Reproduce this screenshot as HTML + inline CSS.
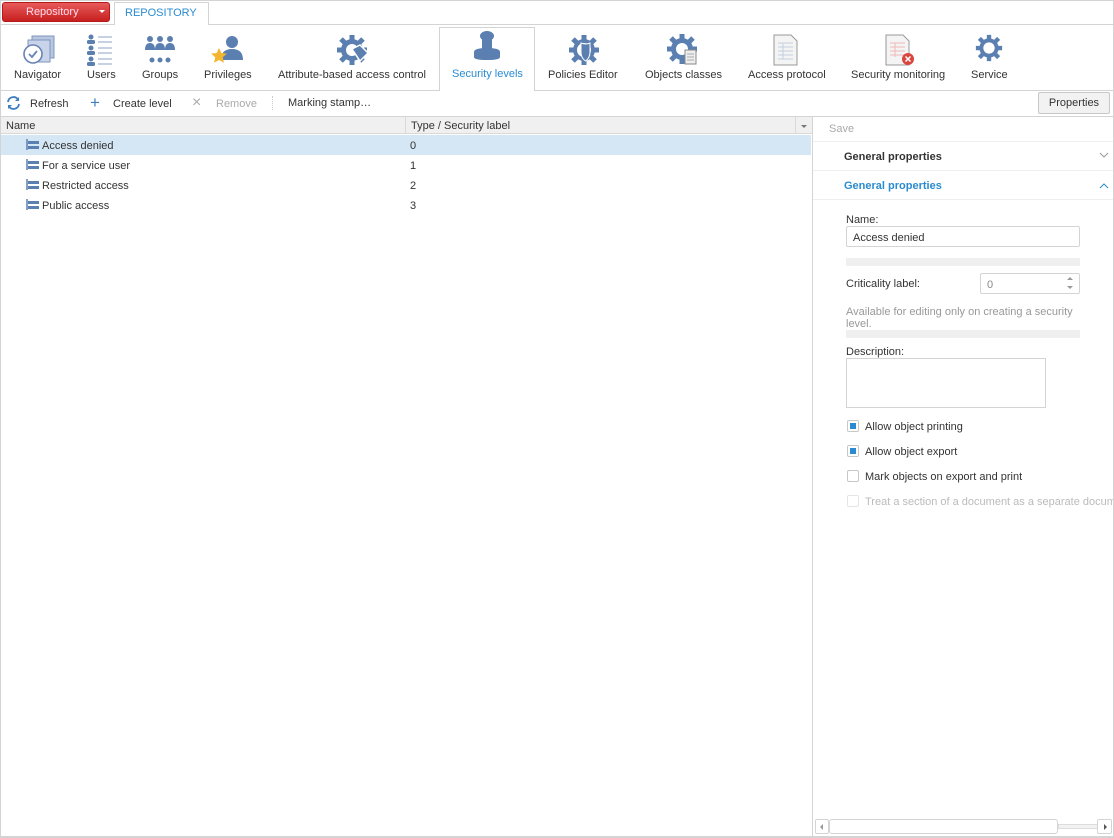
<!DOCTYPE html>
<html><head><meta charset="utf-8"><style>
*{box-sizing:border-box;margin:0;padding:0}
body{width:1114px;height:838px;overflow:hidden;background:#fff;font-family:"Liberation Sans",Arial,sans-serif;font-size:11px;color:#333;position:relative}
.a{position:absolute}
.frame{left:0;top:0;width:1114px;height:838px;border:1px solid #d4d4d4}
.ic{position:absolute;top:34px}
.lbl{position:absolute;top:69px;white-space:nowrap}
.row{position:absolute;left:1px;width:810px;height:20px;line-height:20px}
.row .n{position:absolute;left:41px;top:1px}
.row .v{position:absolute;left:409px;top:1px}
.row svg{position:absolute;left:25px;top:4px}
.cb{position:absolute;left:847px;width:12px;height:12px;border:1px solid #c8c8c8;border-radius:2px;background:#fff}
.cb.on::after{content:"";position:absolute;left:2px;top:2px;width:6px;height:6px;background:#2a8bd0}
.cl{position:absolute;left:865px;white-space:nowrap}
</style></head><body>
<div class="a frame"></div>
<div class="a" style="left:2px;top:2px;width:108px;height:20px;border-radius:3px;background:linear-gradient(#e85a5a,#c71f1f);border:1px solid #b51a1a"></div>
<div class="a" style="left:26px;top:6px;color:#fde;font-size:11px">Repository</div>
<div class="a" style="left:99px;top:10px;width:0;height:0;border-left:3px solid transparent;border-right:3px solid transparent;border-top:3px solid #fff"></div>
<div class="a" style="left:0;top:24px;width:1114px;height:1px;background:#d4d4d4"></div>
<div class="a" style="left:114px;top:2px;width:95px;height:23px;border:1px solid #d4d4d4;border-bottom:none;background:#fff"></div>
<div class="a" style="left:125px;top:7px;color:#2a8bd0;font-size:11px">REPOSITORY</div>
<div class="a" style="left:0;top:90px;width:1114px;height:1px;background:#d4d4d4"></div>
<div class="a" style="left:439px;top:27px;width:96px;height:64px;border:1px solid #d4d4d4;border-bottom:none;background:#fff"></div>
<svg class="ic" style="left:22px" width="34" height="32" viewBox="0 0 34 32"><rect x="10" y="2" width="22" height="22" fill="#b8c6e0" stroke="#7f95bd"/><rect x="6" y="6" width="22" height="22" fill="#c9d4ea" stroke="#7f95bd"/><circle cx="11" cy="20" r="9" fill="#fff" stroke="#6a84b3" stroke-width="1.6"/><path d="M7 20l3 3 5-6" stroke="#6a84b3" stroke-width="1.8" fill="none"/></svg>
<svg class="ic" style="left:86px" width="30" height="32" viewBox="0 0 30 32"><g fill="#5a7fb0"><circle cx="5" cy="3" r="2.5"/><rect x="1" y="6" width="8" height="4" rx="1.5"/><circle cx="5" cy="14" r="2.5"/><rect x="1" y="17" width="8" height="4" rx="1.5"/><circle cx="5" cy="25" r="2.5"/><rect x="1" y="28" width="8" height="4" rx="1.5"/></g><g stroke="#8da3c8"><path d="M12 3h14M12 8h14M12 14h14M12 19h14M12 25h14M12 30h14"/></g></svg>
<svg class="ic" style="left:144px" width="32" height="32" viewBox="0 0 32 32"><g fill="#5a7fb0"><circle cx="6" cy="5" r="3"/><path d="M1 16q0-7 5-7t5 7z"/><circle cx="16" cy="5" r="3"/><path d="M11 16q0-7 5-7t5 7z"/><circle cx="26" cy="5" r="3"/><path d="M21 16q0-7 5-7t5 7z"/><circle cx="8" cy="26" r="2.5"/><circle cx="16" cy="26" r="2.5"/><circle cx="24" cy="26" r="2.5"/></g></svg>
<svg class="ic" style="left:210px" width="34" height="34" viewBox="0 0 34 34"><g fill="#5a7fb0"><circle cx="22" cy="8" r="6"/><path d="M11 26q0-11 11-11t11 11z"/></g><path d="M9 14l2.4 5 5.4.6-4 3.7 1.1 5.4L9 26l-4.9 2.7 1.1-5.4-4-3.7 5.4-.6z" fill="#f2b630"/></svg>
<svg class="ic" style="left:336px" width="34" height="32" viewBox="0 0 34 32"><g fill="#5a7fb0"><circle cx="16" cy="16" r="11"/><g stroke="#5a7fb0" stroke-width="5"><path d="M16 1v30M1 16h30M5 5l22 22M27 5L5 27"/></g></g><circle cx="16" cy="16" r="6" fill="#fff"/><path d="M16 15l8-4 8 8-8 8z" fill="#5a7fb0" stroke="#fff" stroke-width="1.5"/></svg>
<svg class="ic" style="left:472px;top:30px" width="30" height="34" viewBox="0 0 30 34"><g fill="#5a7fb0"><ellipse cx="15" cy="6" rx="7" ry="5"/><rect x="10" y="8" width="10" height="12"/><path d="M2 22q0-4 13-4t13 4v5q0 3-13 3T2 27z"/></g></svg>
<svg class="ic" style="left:568px" width="32" height="32" viewBox="0 0 32 32"><g fill="#5a7fb0"><circle cx="16" cy="16" r="11"/><g stroke="#5a7fb0" stroke-width="5"><path d="M16 1v30M1 16h30M5 5l22 22M27 5L5 27"/></g></g><circle cx="16" cy="16" r="7" fill="#fff"/><path d="M13 9q5 2 9 0v9q0 6-4.5 9Q13 24 13 18z" fill="#5a7fb0" stroke="#fff"/></svg>
<svg class="ic" style="left:667px" width="34" height="34" viewBox="0 0 34 34"><g fill="#5a7fb0"><circle cx="15" cy="15" r="11"/><g stroke="#5a7fb0" stroke-width="5"><path d="M15 0v30M0 15h30M4 4l22 22M26 4L4 26"/></g></g><circle cx="15" cy="15" r="6" fill="#fff"/><rect x="18" y="16" width="11" height="14" fill="#eee" stroke="#888"/><path d="M20 20h7M20 23h7M20 26h7" stroke="#aaa"/></svg>
<svg class="ic" style="left:773px" width="26" height="32" viewBox="0 0 26 32"><path d="M1 1h17l6 6v24H1z" fill="#f4f4f4" stroke="#999"/><path d="M5 9h15M5 13h15M5 17h15M5 21h15M5 25h15M10 9v16" stroke="#c5cfe0"/></svg>
<svg class="ic" style="left:885px" width="32" height="34" viewBox="0 0 32 34"><path d="M1 1h17l6 6v24H1z" fill="#f4f4f4" stroke="#999"/><path d="M5 9h15M5 13h15M5 17h15M5 21h15M10 9v14" stroke="#f0b8b8"/><circle cx="23" cy="25" r="6" fill="#d9463f"/><path d="M20.5 22.5l5 5M25.5 22.5l-5 5" stroke="#fff" stroke-width="1.5"/></svg>
<svg class="ic" style="left:975px" width="28" height="28" viewBox="0 0 32 32"><g fill="#5a7fb0"><circle cx="16" cy="16" r="11"/><g stroke="#5a7fb0" stroke-width="5"><path d="M16 1v30M1 16h30M5 5l22 22M27 5L5 27"/></g></g><circle cx="16" cy="16" r="6.5" fill="#fff"/></svg>
<div class="lbl" style="left:14px">Navigator</div>
<div class="lbl" style="left:87px">Users</div>
<div class="lbl" style="left:142px">Groups</div>
<div class="lbl" style="left:204px">Privileges</div>
<div class="lbl" style="left:278px">Attribute-based access control</div>
<div class="lbl" style="left:452px;top:68px;color:#2a8bd0">Security levels</div>
<div class="lbl" style="left:548px">Policies Editor</div>
<div class="lbl" style="left:645px">Objects classes</div>
<div class="lbl" style="left:748px">Access protocol</div>
<div class="lbl" style="left:851px">Security monitoring</div>
<div class="lbl" style="left:971px">Service</div>
<svg class="a" style="left:6px;top:96px" width="15" height="14" viewBox="0 0 15 14"><path d="M2 6a5.5 5.5 0 0 1 10-2.5M13 8a5.5 5.5 0 0 1-10 2.5" stroke="#3f7fc0" stroke-width="1.8" fill="none"/><path d="M13 1v4h-4zM2 13V9h4z" fill="#3f7fc0"/></svg>
<div class="a" style="left:30px;top:98px">Refresh</div>
<div class="a" style="left:90px;top:96px;font-size:17px;line-height:14px;color:#3f7fc0">+</div>
<div class="a" style="left:113px;top:98px">Create level</div>
<div class="a" style="left:192px;top:95px;font-size:16px;line-height:16px;color:#aaa">×</div>
<div class="a" style="left:216px;top:98px;color:#aaa">Remove</div>
<div class="a" style="left:272px;top:96px;height:14px;border-left:1px dotted #ccc"></div>
<div class="a" style="left:288px;top:97px">Marking stamp…</div>
<div class="a" style="left:1038px;top:92px;width:72px;height:22px;border:1px solid #c8c8c8;background:#f2f2f2;border-radius:2px;text-align:center;line-height:20px">Properties</div>
<div class="a" style="left:0;top:116px;width:1114px;height:1px;background:#d4d4d4"></div>
<div class="a" style="left:1px;top:117px;width:811px;height:17px;background:#f0f0f0;border-bottom:1px solid #d9d9d9"></div>
<div class="a" style="left:6px;top:120px">Name</div>
<div class="a" style="left:405px;top:117px;width:1px;height:17px;background:#d9d9d9"></div>
<div class="a" style="left:411px;top:120px">Type / Security label</div>
<div class="a" style="left:795px;top:117px;width:1px;height:17px;background:#d9d9d9"></div>
<div class="a" style="left:801px;top:125px;border-left:3px solid transparent;border-right:3px solid transparent;border-top:3px solid #777"></div>
<div class="a" style="left:812px;top:117px;width:1px;height:720px;background:#d4d4d4"></div>
<div class="row" style="top:135px;background:#d5e7f5"><svg width="13" height="12" viewBox="0 0 13 12"><path d="M1 0v11" stroke="#5a7fb0" stroke-width="1.5"/><rect x="2" y="2" width="11" height="3" fill="#5a7fb0"/><rect x="2" y="7" width="11" height="3" fill="#5a7fb0"/></svg><span class="n">Access denied</span><span class="v">0</span></div>
<div class="row" style="top:155px"><svg width="13" height="12" viewBox="0 0 13 12"><path d="M1 0v11" stroke="#5a7fb0" stroke-width="1.5"/><rect x="2" y="2" width="11" height="3" fill="#5a7fb0"/><rect x="2" y="7" width="11" height="3" fill="#5a7fb0"/></svg><span class="n">For a service user</span><span class="v">1</span></div>
<div class="row" style="top:175px"><svg width="13" height="12" viewBox="0 0 13 12"><path d="M1 0v11" stroke="#5a7fb0" stroke-width="1.5"/><rect x="2" y="2" width="11" height="3" fill="#5a7fb0"/><rect x="2" y="7" width="11" height="3" fill="#5a7fb0"/></svg><span class="n">Restricted access</span><span class="v">2</span></div>
<div class="row" style="top:195px"><svg width="13" height="12" viewBox="0 0 13 12"><path d="M1 0v11" stroke="#5a7fb0" stroke-width="1.5"/><rect x="2" y="2" width="11" height="3" fill="#5a7fb0"/><rect x="2" y="7" width="11" height="3" fill="#5a7fb0"/></svg><span class="n">Public access</span><span class="v">3</span></div>
<div class="a" style="left:829px;top:123px;color:#aaa">Save</div>
<div class="a" style="left:813px;top:141px;width:300px;height:1px;background:#eee"></div>
<div class="a" style="left:844px;top:151px;font-weight:bold;color:#333">General properties</div>
<svg class="a" style="left:1099px;top:152px" width="10" height="6"><path d="M1 1l4 4 4-4" stroke="#999" fill="none"/></svg>
<div class="a" style="left:813px;top:170px;width:300px;height:1px;background:#eee"></div>
<div class="a" style="left:844px;top:180px;font-weight:bold;color:#2a8bd0">General properties</div>
<svg class="a" style="left:1099px;top:183px" width="10" height="6"><path d="M1 5l4-4 4 4" stroke="#2a8bd0" fill="none"/></svg>
<div class="a" style="left:813px;top:199px;width:300px;height:1px;background:#eee"></div>
<div class="a" style="left:846px;top:214px">Name:</div>
<div class="a" style="left:846px;top:226px;width:234px;height:21px;border:1px solid #d4d4d4;border-radius:2px;padding:5px 6px">Access denied</div>
<div class="a" style="left:846px;top:258px;width:234px;height:8px;background:#efefef"></div>
<div class="a" style="left:846px;top:278px">Criticality label:</div>
<div class="a" style="left:980px;top:273px;width:100px;height:21px;border:1px solid #d4d4d4;border-radius:2px;padding:5px 6px;color:#888">0</div>
<div class="a" style="left:1067px;top:277px;border-left:3px solid transparent;border-right:3px solid transparent;border-bottom:3px solid #999"></div>
<div class="a" style="left:1067px;top:286px;border-left:3px solid transparent;border-right:3px solid transparent;border-top:3px solid #999"></div>
<div class="a" style="left:846px;top:306px;width:240px;color:#999;line-height:12px">Available for editing only on creating a security level.</div>
<div class="a" style="left:846px;top:330px;width:234px;height:8px;background:#efefef"></div>
<div class="a" style="left:846px;top:346px">Description:</div>
<div class="a" style="left:846px;top:358px;width:200px;height:50px;border:1px solid #d4d4d4"></div>
<div class="cb on" style="top:420px"></div><div class="cl" style="top:421px">Allow object printing</div>
<div class="cb on" style="top:445px"></div><div class="cl" style="top:446px">Allow object export</div>
<div class="cb" style="top:470px"></div><div class="cl" style="top:471px">Mark objects on export and print</div>
<div class="cb" style="top:495px;border-color:#e4e4e4"></div><div class="cl" style="top:496px;color:#bbb">Treat a section of a document as a separate document</div>
<div class="a" style="left:1113px;top:0;width:1px;height:838px;background:#d4d4d4"></div>
<div class="a" style="left:813px;top:818px;width:300px;height:18px;background:#fff"></div>
<div class="a" style="left:815px;top:819px;width:14px;height:15px;border:1px solid #d4d4d4;border-radius:2px"></div>
<div class="a" style="left:820px;top:824px;border-top:3px solid transparent;border-bottom:3px solid transparent;border-right:3px solid #999"></div>
<div class="a" style="left:829px;top:819px;width:229px;height:15px;border:1px solid #d4d4d4;border-radius:3px"></div>
<div class="a" style="left:1058px;top:824px;width:40px;height:5px;border:1px solid #ddd;background:#f2f2f2"></div>
<div class="a" style="left:1097px;top:819px;width:15px;height:15px;border:1px solid #d4d4d4;border-radius:2px"></div>
<div class="a" style="left:1104px;top:824px;border-top:3px solid transparent;border-bottom:3px solid transparent;border-left:3px solid #555"></div>
<div class="a" style="left:0;top:836px;width:1114px;height:2px;background:#d4d4d4"></div>
</body></html>
